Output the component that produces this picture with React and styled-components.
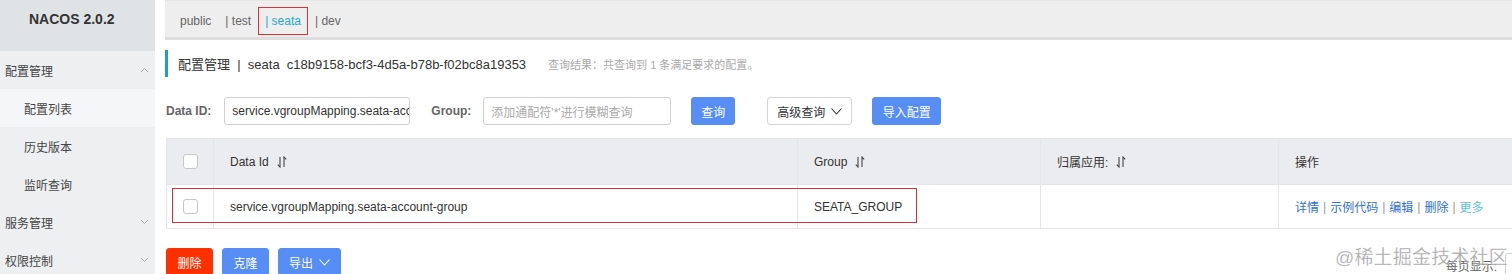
import styled, { createGlobalStyle } from "styled-components";

const GlobalStyle = createGlobalStyle`
  html, body {
    margin: 0;
    padding: 0;
    background: #fff;
    overflow: hidden;
  }
  body {
    font-family: "Liberation Sans", "Noto Sans CJK SC", sans-serif;
    font-size: 12px;
    color: #333;
  }
  * {
    box-sizing: border-box;
  }
`;

const Page = styled.div`
  position: relative;
  display: flex;
  width: 1512px;
  height: 274px;
  overflow: hidden;
`;

const Sidebar = styled.aside`
  width: 155px;
  flex-shrink: 0;
  background: #edeff1;
  display: flex;
  flex-direction: column;
  & > * {
    flex-shrink: 0;
  }
`;

const Logo = styled.div`
  height: 51px;
  background: #e0e3e6;
  padding: 11px 0 0 29px;
  font-size: 14px;
  font-weight: bold;
  color: #333;
  line-height: 16px;
`;

const MenuItem = styled.div`
  height: 38px;
  display: flex;
  align-items: center;
  justify-content: space-between;
  padding: 0 6px 0 ${(p) => (p.$sub ? 24 : 5)}px;
  background: ${(p) => (p.$active ? "#f5f6f7" : "transparent")};
  color: #444;
  font-size: 12px;
`;

const Main = styled.main`
  width: 1400px;
  flex-shrink: 0;
  margin-left: 10px;
  display: flex;
  flex-direction: column;
  & > * {
    flex-shrink: 0;
  }
`;

const TopBar = styled.div`
  height: 40px;
  background: #eeeeee;
  border-top: 1px solid #e6e6e6;
  border-bottom: 3px solid #dedede;
  display: flex;
  align-items: flex-start;
  padding: 6px 0 0 8px;
`;

const Tab = styled.div`
  padding: 6px 6px 5px;
  line-height: 15px;
  border: 1px solid ${(p) => (p.$active ? "#d9303c" : "transparent")};
  color: ${(p) => (p.$active ? "#25a8cf" : "#666")};
  font-size: 12px;
  white-space: pre;
`;

const TitleBar = styled.div`
  margin-top: 10px;
  height: 27px;
  border-left: 3px solid #1e9ad6;
  padding-left: 10px;
  display: flex;
  align-items: center;
  white-space: pre;
`;

const TitleText = styled.span`
  font-size: 13px;
  color: #333;
`;

const Hint = styled.span`
  margin-left: 22px;
  font-size: 11px;
  color: #aaa;
`;

const FilterRow = styled.div`
  margin-top: 20px;
  height: 28px;
  display: flex;
  align-items: center;
  padding-left: 1px;
`;

const Label = styled.span`
  margin-left: ${(p) => p.$gap || 0}px;
  font-weight: bold;
  font-size: 12px;
  color: #666;
`;

const Input = styled.div`
  margin-left: ${(p) => p.$gap || 0}px;
  width: ${(p) => p.$w}px;
  height: 28px;
  border: 1px solid #d0d0d0;
  border-radius: 3px;
  padding: 0 7px;
  display: flex;
  align-items: center;
  overflow: hidden;
  white-space: nowrap;
  font-size: 12px;
  color: ${(p) => (p.$placeholder ? "#aaa" : "#333")};
  background: #fff;
`;

const Button = styled.div`
  margin-left: ${(p) => p.$gap || 0}px;
  width: ${(p) => p.$w}px;
  height: 28px;
  border-radius: 3px;
  display: flex;
  align-items: center;
  justify-content: center;
  gap: 6px;
  font-size: 12px;
  background: ${(p) =>
    p.$kind === "danger" ? "#ff3000" : p.$kind === "plain" ? "#fff" : "#568ef5"};
  border: 1px solid
    ${(p) =>
      p.$kind === "danger" ? "#ff3000" : p.$kind === "plain" ? "#d6d6d6" : "#568ef5"};
  color: ${(p) => (p.$kind === "plain" ? "#333" : "#fff")};
`;

const Table = styled.div`
  margin: 13px 0 0 1px;
  border: 1px solid #e6e6e6;
`;

const Row = styled.div`
  position: relative;
  display: grid;
  grid-template-columns: 46px 584px 243px 238px 1fr;
  height: ${(p) => (p.$head ? 45 : 44)}px;
  background: ${(p) => (p.$head ? "#ebecef" : "#fff")};
  border-top: ${(p) => (p.$head ? "none" : "1px solid #e6e6e6")};
`;

const Cell = styled.div`
  display: flex;
  align-items: center;
  justify-content: ${(p) => (p.$center ? "center" : "flex-start")};
  padding-left: ${(p) => (p.$center ? 0 : 16)}px;
  border-left: ${(p) => (p.$first ? "none" : "1px solid #e6e6e6")};
  font-size: 12px;
  color: #333;
  white-space: nowrap;
  gap: 8px;
`;

const Checkbox = styled.span`
  width: 15px;
  height: 15px;
  border: 1px solid #c8c8c8;
  border-radius: 3px;
  background: #fff;
`;

const Highlight = styled.div`
  position: absolute;
  left: 5px;
  top: 3px;
  width: 745px;
  height: 35px;
  border: 1px solid #d9303c;
  pointer-events: none;
`;

const Links = styled.div`
  display: flex;
  align-items: center;
  font-size: 12px;
`;

const Link = styled.span`
  color: ${(p) => (p.$more ? "#5cc4d8" : "#2f72cf")};
`;

const Sep = styled.span`
  margin: 0 4px;
  color: ${(p) => (p.$warm ? "#b8935e" : "#8a9bb3")};
`;

const Footer = styled.div`
  margin-top: 19px;
  display: flex;
  align-items: flex-start;
  justify-content: space-between;
  padding-left: 1px;
`;

const ButtonGroup = styled.div`
  display: flex;
  gap: 9px;
`;

const PageSize = styled.div`
  display: flex;
  align-items: flex-start;
  gap: 8px;
  padding-top: 9px;
  font-size: 12px;
  color: #666;
`;

const Select = styled.div`
  margin-top: -4px;
  width: 60px;
  height: 28px;
  border: 1px solid #d0d0d0;
  border-radius: 3px;
`;

const Watermark = styled.div`
  position: absolute;
  right: 4px;
  bottom: 5px;
  font-size: 19px;
  color: rgba(150, 150, 150, 0.8);
  letter-spacing: 0.2px;
  -webkit-text-stroke: 0.3px rgba(255, 255, 255, 0.6);
  pointer-events: none;
`;

const Caret = ({ up }) => (
  <svg width="9" height="6" viewBox="0 0 9 6">
    <polyline
      points={up ? "1,5 4.5,1.5 8,5" : "1,1 4.5,4.5 8,1"}
      fill="none"
      stroke="#a8a8a8"
      strokeWidth="1"
    />
  </svg>
);

const Chevron = ({ color = "#333" }) => (
  <svg width="11" height="7" viewBox="0 0 11 7">
    <polyline points="0.5,0.5 5.5,6 10.5,0.5" fill="none" stroke={color} strokeWidth="1.1" />
  </svg>
);

const SortIcon = () => (
  <svg width="10" height="12" viewBox="0 0 10 12">
    <path d="M3 1 V11 L0.8 8.6 M7 11 V1 L9.2 3.4" fill="none" stroke="#444" strokeWidth="1.1" />
  </svg>
);

const menu = [
  { label: "配置管理", caret: "up" },
  { label: "配置列表", sub: true, active: true },
  { label: "历史版本", sub: true },
  { label: "监听查询", sub: true },
  { label: "服务管理", caret: "down" },
  { label: "权限控制", caret: "down" },
];

const tabs = ["public", "| test", "| seata", "| dev"];

export default function App() {
  return (
    <Page>
      <GlobalStyle />
      <Sidebar>
        <Logo>NACOS 2.0.2</Logo>
        {menu.map((m) => (
          <MenuItem key={m.label} $sub={m.sub} $active={m.active}>
            <span>{m.label}</span>
            {m.caret && <Caret up={m.caret === "up"} />}
          </MenuItem>
        ))}
      </Sidebar>

      <Main>
        <TopBar>
          {tabs.map((t) => (
            <Tab key={t} $active={t === "| seata"}>
              {t}
            </Tab>
          ))}
        </TopBar>

        <TitleBar>
          <TitleText>配置管理  |  seata  c18b9158-bcf3-4d5a-b78b-f02bc8a19353</TitleText>
          <Hint>查询结果：共查询到 1 条满足要求的配置。</Hint>
        </TitleBar>

        <FilterRow>
          <Label>Data ID:</Label>
          <Input $gap={13} $w={186}>
            service.vgroupMapping.seata-account-group
          </Input>
          <Label $gap={21}>Group:</Label>
          <Input $gap={12} $w={188} $placeholder>
            添加通配符'*'进行模糊查询
          </Input>
          <Button $gap={20} $w={44}>查询</Button>
          <Button $gap={32} $w={85} $kind="plain">
            高级查询
            <Chevron />
          </Button>
          <Button $gap={20} $w={69}>导入配置</Button>
        </FilterRow>

        <Table>
          <Row $head>
            <Cell $center $first>
              <Checkbox />
            </Cell>
            <Cell>
              Data Id <SortIcon />
            </Cell>
            <Cell>
              Group <SortIcon />
            </Cell>
            <Cell>
              归属应用: <SortIcon />
            </Cell>
            <Cell>操作</Cell>
          </Row>
          <Row>
            <Cell $center $first>
              <Checkbox />
            </Cell>
            <Cell>service.vgroupMapping.seata-account-group</Cell>
            <Cell>SEATA_GROUP</Cell>
            <Cell />
            <Cell>
              <Links>
                <Link>详情</Link>
                <Sep>|</Sep>
                <Link>示例代码</Link>
                <Sep>|</Sep>
                <Link>编辑</Link>
                <Sep>|</Sep>
                <Link>删除</Link>
                <Sep $warm>|</Sep>
                <Link $more>更多</Link>
              </Links>
            </Cell>
            <Highlight />
          </Row>
        </Table>

        <Footer>
          <ButtonGroup>
            <Button $w={47} $kind="danger">删除</Button>
            <Button $w={47}>克隆</Button>
            <Button $w={63}>
              导出
              <Chevron color="#fff" />
            </Button>
          </ButtonGroup>
          <PageSize>
            每页显示:
            <Select />
          </PageSize>
        </Footer>
      </Main>

      <Watermark>@稀土掘金技术社区</Watermark>
    </Page>
  );
}
